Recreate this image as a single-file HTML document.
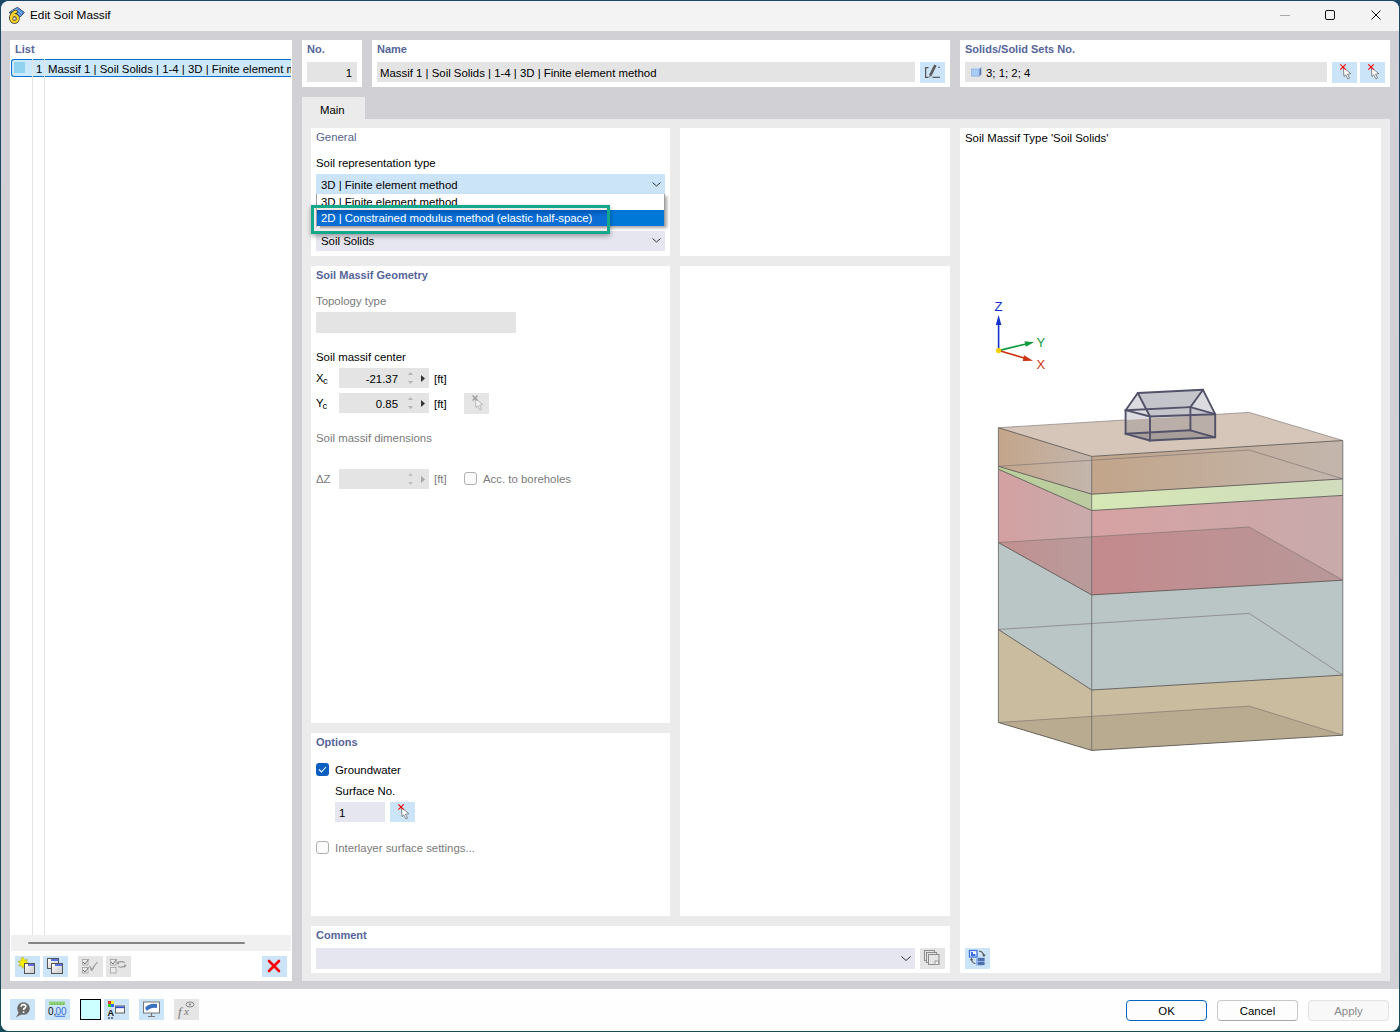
<!DOCTYPE html>
<html><head><meta charset="utf-8">
<style>
*{box-sizing:border-box;margin:0;padding:0}
html,body{width:1400px;height:1032px;overflow:hidden;background:linear-gradient(#1c4766,#164c5a);font-family:"Liberation Sans",sans-serif;font-size:11.4px;color:#000}
.a{position:absolute}
.t{position:absolute;white-space:nowrap;line-height:14px}
.h{font-weight:bold;color:#56659a;font-size:11px}
.g{color:#7a7a7a}
.w{position:absolute;background:#fff}
.inp{position:absolute;background:#e4e4e4}
.binp{position:absolute;background:#e6e6f0}
.btn{position:absolute;background:#cce4f7}
.gbtn{position:absolute;background:#e5e5e5}
svg{position:absolute;overflow:visible}
</style></head><body>
<!-- window -->
<div class="a" style="left:1px;top:1px;width:1398px;height:1030px;background:#d1d0d5;border-radius:8px;overflow:hidden">
  <div class="a" style="left:0;top:0;width:1398px;height:30px;background:#f3f3f3"></div>
  <div class="a" style="left:0;top:988px;width:1398px;height:42px;background:#fefefe"></div>
</div>

<!-- title -->
<div class="t" style="left:30px;top:8px;font-size:11.8px">Edit Soil Massif</div>


<!-- app icon -->
<svg style="left:6px;top:4px" width="22" height="22" viewBox="0 0 22 22">
  <path d="M3 8.7 L6.5 6 L11.5 3.2 L18.4 8.5 L14 13.2 L10.5 9.5 L6 9.5 Z" fill="#4a84dc" stroke="#2a3340" stroke-width="0.7" stroke-linejoin="round"/>
  <path d="M6 7.2 L11.5 4.8 M8 8.3 L12.5 6.5 L16 9.5 M11.5 9 L14.5 11.5" stroke="#9fd0fa" stroke-width="0.9" fill="none"/>
  <circle cx="8.5" cy="14.5" r="3.4" fill="none" stroke="#2a2a2a" stroke-width="3.6"/>
  <path d="M5.2 14.5 Q5 9.5 9.8 7.6" fill="none" stroke="#2a2a2a" stroke-width="3.8" stroke-linecap="round"/>
  <circle cx="8.5" cy="14.5" r="3.4" fill="none" stroke="#fcd42a" stroke-width="2.4"/>
  <path d="M5.2 14.5 Q5 9.5 9.8 7.6" fill="none" stroke="#fcd42a" stroke-width="2.5" stroke-linecap="round"/>
  <circle cx="8.5" cy="14.5" r="1.1" fill="#fff" stroke="#444" stroke-width="0.5"/>
</svg>
<!-- window buttons -->
<div class="a" style="left:1280px;top:15px;width:10px;height:1px;background:#a8a8a8"></div>
<div class="a" style="left:1325px;top:10px;width:10px;height:10px;border:1px solid #111;border-radius:2px"></div>
<svg style="left:1371px;top:10px" width="10" height="10"><path d="M0.5 0.5 L9.5 9.5 M9.5 0.5 L0.5 9.5" stroke="#111" stroke-width="1"/></svg>

<!-- List panel -->
<div class="w" style="left:10px;top:40px;width:282px;height:941px"></div>
<div class="t h" style="left:15px;top:42px">List</div>


<!-- list row -->
<div class="a" style="left:11px;top:59px;width:280px;height:18px;background:#cce8fb;border:1px solid #0a6fd0;border-right:none;border-radius:3px 0 0 3px"></div>
<div class="a" style="left:14px;top:62px;width:11px;height:11px;background:#8fd3f0"></div>
<div class="a" style="left:32px;top:59px;width:1px;height:876px;background:#e3e3e3"></div>
<div class="a" style="left:44px;top:59px;width:1px;height:876px;background:#e3e3e3"></div>
<div class="t" style="left:36px;top:62px">1</div>
<div class="a" style="left:45px;top:59px;width:246px;height:18px;overflow:hidden"><div class="t" style="left:3px;top:3px">Massif 1 | Soil Solids | 1-4 | 3D | Finite element method</div></div>
<!-- scrollbar -->
<div class="a" style="left:11px;top:935px;width:280px;height:16px;background:#f0f0f0"></div>
<div class="a" style="left:28px;top:942px;width:217px;height:2px;background:#858585;border-radius:1px"></div>
<!-- list toolbar -->
<div class="btn" style="left:15px;top:956px;width:25px;height:21px"></div><svg style="left:15px;top:956px" width="25" height="21"><defs><linearGradient id="wg" x1="0" y1="0" x2="1" y2="1"><stop offset="0" stop-color="#fff"/><stop offset="1" stop-color="#c8c8c8"/></linearGradient></defs><path d="M8.5 1.5 L9.6 4.4 L12.6 3.2 L11.2 6.1 L14 7.3 L11 8.3 L12 11.3 L9.1 9.9 L7.6 12.6 L6.8 9.5 L3.6 10 L5.4 7.4 L3 5.4 L6.2 5 L6.3 1.9 Z" fill="#f8f000" stroke="#a8a000" stroke-width="0.5"/><rect x="9.5" y="7.5" width="10" height="10" fill="url(#wg)" stroke="#555" stroke-width="1"/><rect x="13" y="8.2" width="6" height="1.6" fill="#3a55e0"/><rect x="10.3" y="8.2" width="2" height="1.6" fill="#fff"/></svg>
<div class="btn" style="left:43px;top:956px;width:25px;height:21px"></div><svg style="left:43px;top:956px" width="25" height="21"><rect x="4.5" y="2.5" width="11" height="10" fill="url(#wg)" stroke="#555" stroke-width="1"/><rect x="8" y="3.2" width="7" height="1.6" fill="#3a55e0"/><rect x="5.3" y="3.2" width="2" height="1.6" fill="#fff"/><rect x="8.5" y="7.5" width="11" height="10" fill="url(#wg)" stroke="#555" stroke-width="1"/><rect x="12" y="8.2" width="7" height="1.6" fill="#3a55e0"/><rect x="9.3" y="8.2" width="2" height="1.6" fill="#fff"/></svg>
<div class="gbtn" style="left:78px;top:956px;width:25px;height:21px"></div><svg style="left:78px;top:956px" width="25" height="21"><rect x="4.5" y="3.5" width="5.5" height="5.5" fill="#ececec" stroke="#a0a0a0" stroke-width="0.8"/><path d="M5 6 L7 8 L10.5 3.5" stroke="#666" stroke-width="0.9" fill="none"/><rect x="4.5" y="11.5" width="5.5" height="5.5" fill="#ececec" stroke="#a0a0a0" stroke-width="0.8"/><path d="M5 14 L7 16 L10.5 11.5" stroke="#666" stroke-width="0.9" fill="none"/><path d="M11.5 10 Q13 11 14 13.5 Q16 9 19.5 6 Q16 10 14.2 14.5 L13.2 14.5 Q12.5 12 11.5 10 Z" fill="#999" stroke="#999" stroke-width="0.8"/></svg>
<div class="gbtn" style="left:106px;top:956px;width:25px;height:21px"></div><svg style="left:106px;top:956px" width="25" height="21"><rect x="4.5" y="3.5" width="5.5" height="5.5" fill="#ececec" stroke="#a0a0a0" stroke-width="0.8"/><path d="M5 6 L7 8 L10.5 3.5" stroke="#666" stroke-width="0.9" fill="none"/><rect x="4.5" y="11.5" width="5.5" height="5.5" fill="#ececec" stroke="#a0a0a0" stroke-width="0.8"/><path d="M11 7 Q14 4.5 19 6.5" stroke="#999" stroke-width="1.2" fill="none"/><path d="M10.5 7.5 L13 5 L13 8.5 Z" fill="#999"/><path d="M20 9.5 Q17 12 12 10.5" stroke="#999" stroke-width="1.2" fill="none"/><path d="M20.5 9 L18 12 L18 8.5 Z" fill="#999"/></svg>
<div class="btn" style="left:262px;top:956px;width:25px;height:21px"></div>
<svg style="left:262px;top:956px" width="25" height="21"><path d="M7 5 L17 15 M17 5 L7 15" stroke="#f00" stroke-width="2.6" stroke-linecap="round"/></svg>

<!-- No. panel -->
<div class="w" style="left:302px;top:40px;width:60px;height:47px"></div>
<div class="t h" style="left:307px;top:42px">No.</div>
<div class="inp" style="left:307px;top:62px;width:50px;height:20px"></div>
<div class="t" style="left:340px;top:66px;width:12px;text-align:right">1</div>

<!-- Name panel -->
<div class="w" style="left:372px;top:40px;width:578px;height:47px"></div>
<div class="t h" style="left:377px;top:42px">Name</div>
<div class="inp" style="left:377px;top:62px;width:538px;height:20px"></div>
<div class="t" style="left:380px;top:66px">Massif 1 | Soil Solids | 1-4 | 3D | Finite element method</div>
<div class="btn" style="left:920px;top:62px;width:25px;height:21px"></div><svg style="left:920px;top:62px" width="25" height="21"><path d="M8.5 5.6 H5.6 V15.4 H8.5" stroke="#555" stroke-width="1.2" fill="none"/><path d="M12.4 15.3 H20" stroke="#555" stroke-width="1.2"/><path d="M18.2 5.3 H20" stroke="#555" stroke-width="1.1"/><path d="M15.4 3.2 L10.2 13.6" stroke="#5a5a5a" stroke-width="2.6"/><path d="M10.2 13.6 L9.4 15.2" stroke="#888" stroke-width="1.6"/></svg>

<!-- Solids panel -->
<div class="w" style="left:960px;top:40px;width:430px;height:47px"></div>
<div class="t h" style="left:965px;top:42px">Solids/Solid Sets No.</div>
<div class="inp" style="left:965px;top:62px;width:362px;height:20px"></div>
<svg style="left:971px;top:67px" width="11" height="10"><path d="M0.5 2 L2.5 0.5 L10.3 0.5 L8.3 2 Z" fill="#d6e6fa"/><path d="M0.5 2 H8.3 V9.3 H0.5 Z" fill="#a8cbf7"/><path d="M8.3 2 L10.3 0.5 V7.8 L8.3 9.3 Z" fill="#5b7db3"/><path d="M0.5 2 H8.3 V9.3 H0.5 Z M8.3 2 L10.3 0.5" fill="none" stroke="#7f9fcf" stroke-width="0.5"/></svg><div class="t" style="left:986px;top:66px">3; 1; 2; 4</div>
<div class="btn" style="left:1332px;top:62px;width:25px;height:21px"></div><svg style="left:1332px;top:62px" width="25" height="21" viewBox="0 0 25 21"><path d="M11.3 5.3 L12 14.6 L13.8 12.9 L15.9 16.9 L17.5 16.1 L15.5 12.2 L18.8 11.7 Z" fill="#fff" stroke="#6a6a6a" stroke-width="0.8" stroke-linejoin="round"/><path d="M8.3 2.3 L13.7 7.7 M13.7 2.3 L8.3 7.7" stroke="#f00" stroke-width="1.1"/></svg>
<div class="btn" style="left:1360px;top:62px;width:25px;height:21px"></div><svg style="left:1360px;top:62px" width="25" height="21" viewBox="0 0 25 21"><path d="M11.3 5.3 L12 14.6 L13.8 12.9 L15.9 16.9 L17.5 16.1 L15.5 12.2 L18.8 11.7 Z" fill="#fff" stroke="#6a6a6a" stroke-width="0.8" stroke-linejoin="round"/><path d="M8.3 2.3 L13.7 7.7 M13.7 2.3 L8.3 7.7" stroke="#f00" stroke-width="1.1"/></svg>

<!-- tab -->
<div class="a" style="left:302px;top:97px;width:63px;height:22px;background:#ebebeb"></div>
<div class="t" style="left:320px;top:103px">Main</div>
<div class="a" style="left:302px;top:119px;width:1088px;height:862px;background:#ebebeb"></div>

<!-- General -->
<div class="w" style="left:311px;top:128px;width:359px;height:128px"></div>
<div class="w" style="left:680px;top:128px;width:270px;height:128px"></div>

<!-- General content -->
<div class="t h" style="left:316px;top:130px;font-weight:normal;font-size:11.4px;color:#55638f">General</div>
<div class="t" style="left:316px;top:156px">Soil representation type</div>
<div class="a" style="left:316px;top:174px;width:349px;height:20px;background:#cce4f7"></div>
<div class="t" style="left:321px;top:178px">3D | Finite element method</div>
<svg style="left:651px;top:181px" width="10" height="6"><path d="M1.5 1.5 L5.5 5 L9.5 1.5" stroke="#333" stroke-width="1" fill="none"/></svg>
<div class="binp" style="left:316px;top:231px;width:349px;height:20px"></div>
<div class="t" style="left:321px;top:234px">Soil Solids</div>
<svg style="left:651px;top:237px" width="10" height="6"><path d="M1.5 1.5 L5.5 5 L9.5 1.5" stroke="#333" stroke-width="1" fill="none"/></svg>
<!-- dropdown list -->
<div class="a" style="left:316px;top:194px;width:349px;height:32px;background:#fff;border:1px solid #a0a0a0;border-top:none;box-shadow:2px 2px 3px rgba(0,0,0,0.35)"></div>
<div class="a" style="left:317px;top:194px;width:347px;height:16px;overflow:hidden"><div class="t" style="left:4px;top:1px">3D | Finite element method</div></div>
<div class="a" style="left:317px;top:210px;width:347px;height:16px;background:#0078d7"></div>
<div class="a" style="left:311px;top:205px;width:299px;height:29px;box-shadow:0 2px 5px rgba(0,0,0,0.35)"></div>
<div class="a" style="left:314px;top:208px;width:293px;height:23px;background:#f1eaea"></div>
<div class="a" style="left:316px;top:208px;width:1px;height:19px;background:#a8a0a0"></div>
<div class="a" style="left:320px;top:226px;width:287px;height:3px;background:linear-gradient(#9a9494,#e8e2e2)"></div>
<div class="a" style="left:317px;top:210px;width:290px;height:16px;background:linear-gradient(#0058b4,#0a6ed4 40%,#0a6ed4)"></div>
<div class="t" style="left:321px;top:211px;color:#fff">2D | Constrained modulus method (elastic half-space)</div>
<!-- highlight box -->
<div class="a" style="left:311px;top:205px;width:299px;height:29px;border:3px solid #13a88b"></div>
<!-- Geometry -->
<div class="w" style="left:311px;top:266px;width:359px;height:457px"></div>
<div class="w" style="left:680px;top:266px;width:270px;height:650px"></div>
<!-- Options -->
<div class="w" style="left:311px;top:733px;width:359px;height:183px"></div>
<!-- Comment -->
<div class="w" style="left:311px;top:926px;width:639px;height:47px"></div>
<!-- Preview -->
<div class="w" style="left:960px;top:128px;width:421px;height:845px"></div>

<!--3D--><svg style="left:960px;top:128px" width="421" height="845" viewBox="0 0 421 845"><defs>
<linearGradient id="gBrL" x1="0" x2="1" y1="0" y2="0"><stop offset="0" stop-color="#c4a58a"/><stop offset="1" stop-color="#c3b6ad"/></linearGradient>
<linearGradient id="gBrR" x1="0" x2="1" y1="0" y2="0"><stop offset="0" stop-color="#c2a58a"/><stop offset="1" stop-color="#c3b6ad"/></linearGradient>
<linearGradient id="gPkL" x1="0" x2="1" y1="0" y2="0"><stop offset="0" stop-color="#d4a0a1"/><stop offset="1" stop-color="#c9abac"/></linearGradient>
<linearGradient id="gPkR" x1="0" x2="1" y1="0" y2="0"><stop offset="0" stop-color="#d7a2a3"/><stop offset="1" stop-color="#c8aaab"/></linearGradient>
<linearGradient id="gPkDL" x1="0" x2="1" y1="0" y2="0"><stop offset="0" stop-color="#c39090"/><stop offset="1" stop-color="#b99b9c"/></linearGradient>
<linearGradient id="gPkDR" x1="0" x2="1" y1="0" y2="0"><stop offset="0" stop-color="#c48a8d"/><stop offset="1" stop-color="#b89899"/></linearGradient>
<linearGradient id="gGrL" x1="0" x2="1" y1="0" y2="0"><stop offset="0" stop-color="#bad09a"/><stop offset="1" stop-color="#bccba0"/></linearGradient>
<linearGradient id="gGrR" x1="0" x2="1" y1="0" y2="0"><stop offset="0" stop-color="#d6e8b6"/><stop offset="1" stop-color="#d0dcbd"/></linearGradient>
</defs>
<polygon points="38.4,501.5 131.7,562.0 131.7,622.4 38.4,594.5" fill="#cabd9f" gradientUnits="userSpaceOnUse"/>
<polygon points="131.7,562.0 382.8,547.1 382.8,607.2 131.7,622.4" fill="#cabd9f" />
<polygon points="38.4,594.5 131.7,588.4 131.7,622.4" fill="#b9ab8f" />
<polygon points="131.7,588.4 289.2,578.1 382.8,607.2 131.7,622.4" fill="#b9ab8f" />
<polygon points="38.4,414.6 131.7,466.9 131.7,562.0 38.4,501.5" fill="#bac5c5" gradientUnits="userSpaceOnUse"/>
<polygon points="131.7,466.9 382.8,452.2 382.8,547.1 131.7,562.0" fill="#bac5c5" />
<polygon points="38.4,501.5 131.7,495.5 131.7,562.0" fill="#bac5c5" />
<polygon points="131.7,495.5 289.2,485.4 382.8,547.1 131.7,562.0" fill="#bac5c5" />
<polygon points="38.4,341.2 131.7,382.5 131.7,466.9 38.4,414.6" fill="url(#gPkL)" gradientUnits="userSpaceOnUse"/>
<polygon points="131.7,382.5 382.8,367.4 382.8,452.2 131.7,466.9" fill="url(#gPkR)" />
<polygon points="38.4,414.6 131.7,408.8 131.7,466.9" fill="url(#gPkDL)" />
<polygon points="131.7,408.8 289.2,399.0 382.8,452.2 131.7,466.9" fill="url(#gPkDR)" />
<polygon points="38.4,338.3 131.7,366.2 131.7,382.5 38.4,341.2" fill="url(#gGrL)" gradientUnits="userSpaceOnUse"/>
<polygon points="131.7,366.2 382.8,350.9 382.8,367.4 131.7,382.5" fill="url(#gGrR)" />
<polygon points="38.4,299.7 131.7,328.4 131.7,366.2 38.4,338.3" fill="url(#gBrL)" gradientUnits="userSpaceOnUse"/>
<polygon points="131.7,328.4 382.8,312.5 382.8,350.9 131.7,366.2" fill="url(#gBrR)" />
<polygon points="38.4,338.3 131.7,332.2 131.7,366.2" fill="url(#gBrL)" />
<polygon points="131.7,332.2 289.2,322.0 382.8,350.9 131.7,366.2" fill="url(#gBrR)" />
<polygon points="38.4,299.7 289.2,284.4 382.8,312.5 131.7,328.4" fill="#d5c6b9" />
<polyline points="38.4,299.7 289.2,284.4 382.8,312.5" fill="none" stroke="#7d7272" stroke-width="0.8" opacity="0.8"/>
<polyline points="38.4,338.3 289.2,322.0 382.8,350.9" fill="none" stroke="#7d7272" stroke-width="0.8" opacity="0.8"/>
<polyline points="38.4,414.6 289.2,399.0 382.8,452.2" fill="none" stroke="#7d7272" stroke-width="0.8" opacity="0.8"/>
<polyline points="38.4,501.5 289.2,485.4 382.8,547.1" fill="none" stroke="#7d7272" stroke-width="0.8" opacity="0.8"/>
<polyline points="38.4,594.5 289.2,578.1 382.8,607.2" fill="none" stroke="#7d7272" stroke-width="0.8" opacity="0.8"/>
<polyline points="38.4,299.7 131.7,328.4 382.8,312.5" fill="none" stroke="#5f5a58" stroke-width="0.9" />
<polyline points="38.4,338.3 131.7,366.2 382.8,350.9" fill="none" stroke="#5f5a58" stroke-width="0.9" />
<polyline points="38.4,341.2 131.7,382.5 382.8,367.4" fill="none" stroke="#5f5a58" stroke-width="0.9" />
<polyline points="38.4,414.6 131.7,466.9 382.8,452.2" fill="none" stroke="#5f5a58" stroke-width="0.9" />
<polyline points="38.4,501.5 131.7,562.0 382.8,547.1" fill="none" stroke="#5f5a58" stroke-width="0.9" />
<polyline points="38.4,594.5 131.7,622.4 382.8,607.2" fill="none" stroke="#5f5a58" stroke-width="0.9" />
<line x1="38.4" y1="299.7" x2="38.4" y2="594.5" stroke="#6e6e6e" stroke-width="0.9"/>
<line x1="131.7" y1="328.4" x2="131.7" y2="622.4" stroke="#6e6e6e" stroke-width="0.9"/>
<line x1="382.8" y1="312.5" x2="382.8" y2="607.2" stroke="#6e6e6e" stroke-width="0.9"/>
<clipPath id="topc"><polygon points="38.4,299.7 289.2,284.4 382.8,312.5 131.7,328.4"/></clipPath>
<polygon points="165.6,282.2 177.8,265.0 243.0,261.8 255.2,286.2 255.2,309.3 190.0,312.5 165.6,305.8" fill="#dcdce0" />
<g clip-path="url(#topc)">
<polygon points="165.6,282.2 177.8,265.0 243.0,261.8 255.2,286.2 255.2,309.3 190.0,312.5 165.6,305.8" fill="#b9aea8" />
<polygon points="165.6,305.8 190.0,312.5 255.2,309.3 230.4,302.3" fill="#a89e99" />
</g>
<polygon points="177.8,265.0 243.0,261.8 230.4,279.1 255.2,286.2 190.0,288.5" fill="#c4c5ca" />
<line x1="165.6" y1="305.8" x2="190.0" y2="312.5" stroke="#52526a" stroke-width="1.9" stroke-linecap="round"/>
<line x1="190.0" y1="312.5" x2="255.2" y2="309.3" stroke="#52526a" stroke-width="1.9" stroke-linecap="round"/>
<line x1="255.2" y1="309.3" x2="230.4" y2="302.3" stroke="#52526a" stroke-width="1.9" stroke-linecap="round"/>
<line x1="230.4" y1="302.3" x2="165.6" y2="305.8" stroke="#52526a" stroke-width="1.9" stroke-linecap="round"/>
<line x1="165.6" y1="282.2" x2="190.0" y2="288.5" stroke="#52526a" stroke-width="1.9" stroke-linecap="round"/>
<line x1="190.0" y1="288.5" x2="255.2" y2="286.2" stroke="#52526a" stroke-width="1.9" stroke-linecap="round"/>
<line x1="255.2" y1="286.2" x2="230.4" y2="279.1" stroke="#52526a" stroke-width="1.9" stroke-linecap="round"/>
<line x1="230.4" y1="279.1" x2="165.6" y2="282.2" stroke="#52526a" stroke-width="1.9" stroke-linecap="round"/>
<line x1="165.6" y1="305.8" x2="165.6" y2="282.2" stroke="#52526a" stroke-width="1.9" stroke-linecap="round"/>
<line x1="190.0" y1="312.5" x2="190.0" y2="288.5" stroke="#52526a" stroke-width="1.9" stroke-linecap="round"/>
<line x1="255.2" y1="309.3" x2="255.2" y2="286.2" stroke="#52526a" stroke-width="1.9" stroke-linecap="round"/>
<line x1="230.4" y1="302.3" x2="230.4" y2="279.1" stroke="#52526a" stroke-width="1.9" stroke-linecap="round"/>
<line x1="177.8" y1="265.0" x2="243.0" y2="261.8" stroke="#52526a" stroke-width="1.9" stroke-linecap="round"/>
<line x1="165.6" y1="282.2" x2="177.8" y2="265.0" stroke="#52526a" stroke-width="1.9" stroke-linecap="round"/>
<line x1="190.0" y1="288.5" x2="177.8" y2="265.0" stroke="#52526a" stroke-width="1.9" stroke-linecap="round"/>
<line x1="230.4" y1="279.1" x2="243.0" y2="261.8" stroke="#52526a" stroke-width="1.9" stroke-linecap="round"/>
<line x1="255.2" y1="286.2" x2="243.0" y2="261.8" stroke="#52526a" stroke-width="1.9" stroke-linecap="round"/>

<line x1="38.60000000000002" y1="222.60000000000002" x2="38.60000000000002" y2="197" stroke="#1133cc" stroke-width="1.6"/>
<path d="M38.60000000000002,187 L41.39999999999998,197 L35.799999999999955,197 Z" fill="#1133cc"/>
<line x1="38.60000000000002" y1="222.60000000000002" x2="66" y2="216" stroke="#109a40" stroke-width="1.6"/>
<path d="M74,214.2 L64.5,213.2 L65.79999999999995,218.8 Z" fill="#109a40"/>
<line x1="38.60000000000002" y1="222.60000000000002" x2="65" y2="230.2" stroke="#cc3311" stroke-width="1.6"/>
<path d="M73,232.7 L64,227.3 L62.799999999999955,232.89999999999998 Z" fill="#cc3311"/>
<circle cx="38.60000000000002" cy="222.60000000000002" r="2.6" fill="#f5d000"/>
<text x="34.5" y="183" font-family="Liberation Sans" font-size="13" fill="#1133cc">Z</text>
<text x="76.59999999999991" y="218.8" font-family="Liberation Sans" font-size="13" fill="#109a40">Y</text>
<text x="76.59999999999991" y="241" font-family="Liberation Sans" font-size="13" fill="#cc3311">X</text>
</svg><!--/3D-->
<!-- Geometry content -->
<div class="t h" style="left:316px;top:268px">Soil Massif Geometry</div>
<div class="t g" style="left:316px;top:294px">Topology type</div>
<div class="inp" style="left:316px;top:312px;width:200px;height:21px"></div>
<div class="t" style="left:316px;top:350px">Soil massif center</div>
<div class="t" style="left:316px;top:371px">X<span style="font-size:9.5px;position:relative;top:1.5px;margin-left:-0.5px">c</span></div>
<div class="inp" style="left:339px;top:368px;width:90px;height:20px"></div>
<div class="t" style="left:339px;top:372px;width:59px;text-align:right">-21.37</div>
<svg style="left:406px;top:368px" width="20" height="20"><path d="M2 7 L4.5 4 L7 7 Z M2 13 L4.5 16 L7 13 Z" fill="#b4b4b4"/><path d="M15 7 L19 10.5 L15 14 Z" fill="#333"/></svg>
<div class="t" style="left:434px;top:372px">[ft]</div>
<div class="t" style="left:316px;top:396px">Y<span style="font-size:9.5px;position:relative;top:1.5px;margin-left:-1px">c</span></div>
<div class="inp" style="left:339px;top:393px;width:90px;height:20px"></div>
<div class="t" style="left:339px;top:397px;width:59px;text-align:right">0.85</div>
<svg style="left:406px;top:393px" width="20" height="20"><path d="M2 7 L4.5 4 L7 7 Z M2 13 L4.5 16 L7 13 Z" fill="#b4b4b4"/><path d="M15 7 L19 10.5 L15 14 Z" fill="#333"/></svg>
<div class="t" style="left:434px;top:397px">[ft]</div>
<div class="gbtn" style="left:464px;top:393px;width:25px;height:21px"></div><svg style="left:464px;top:393px" width="25" height="21" viewBox="0 0 25 21"><path d="M11.3 5.3 L12 14.6 L13.8 12.9 L15.9 16.9 L17.5 16.1 L15.5 12.2 L18.8 11.7 Z" fill="#f2f2f2" stroke="#a8a8a8" stroke-width="0.8" stroke-linejoin="round"/><path d="M8.5 2.5 L13.5 7.5 M13.5 2.5 L8.5 7.5" stroke="#9a9a9a" stroke-width="1.3"/></svg>
<div class="t g" style="left:316px;top:431px">Soil massif dimensions</div>
<div class="t g" style="left:316px;top:472px">&Delta;Z</div>
<div class="inp" style="left:339px;top:469px;width:90px;height:20px"></div>
<svg style="left:406px;top:469px" width="20" height="20"><path d="M2 7 L4.5 4 L7 7 Z M2 13 L4.5 16 L7 13 Z" fill="#c0c0c0"/><path d="M15 7 L19 10.5 L15 14 Z" fill="#a8a8a8"/></svg>
<div class="t g" style="left:434px;top:472px">[ft]</div>
<div class="a" style="left:464px;top:472px;width:13px;height:13px;border:1px solid #b0b0b0;border-radius:3px;background:#fbfbfb"></div>
<div class="t g" style="left:483px;top:472px">Acc. to boreholes</div>

<!-- Options content -->
<div class="t h" style="left:316px;top:735px">Options</div>
<div class="a" style="left:316px;top:763px;width:13px;height:13px;background:#0a5fc0;border-radius:3px"></div>
<svg style="left:316px;top:763px" width="13" height="13"><path d="M3 6.5 L5.5 9 L10 4" stroke="#fff" stroke-width="1.1" fill="none"/></svg>
<div class="t" style="left:335px;top:763px">Groundwater</div>
<div class="t" style="left:335px;top:784px">Surface No.</div>
<div class="binp" style="left:335px;top:802px;width:50px;height:20px"></div>
<div class="t" style="left:339px;top:806px">1</div>
<div class="btn" style="left:390px;top:802px;width:25px;height:20px"></div><svg style="left:390px;top:802px" width="25" height="21" viewBox="0 0 25 21"><path d="M11.3 5.3 L12 14.6 L13.8 12.9 L15.9 16.9 L17.5 16.1 L15.5 12.2 L18.8 11.7 Z" fill="#fff" stroke="#6a6a6a" stroke-width="0.8" stroke-linejoin="round"/><path d="M8.3 2.3 L13.7 7.7 M13.7 2.3 L8.3 7.7" stroke="#f00" stroke-width="1.1"/></svg>
<div class="a" style="left:316px;top:841px;width:13px;height:13px;border:1px solid #b0b0b0;border-radius:3px;background:#fbfbfb"></div>
<div class="t g" style="left:335px;top:841px">Interlayer surface settings...</div>

<!-- Comment content -->
<div class="t h" style="left:316px;top:928px">Comment</div>
<div class="binp" style="left:316px;top:948px;width:599px;height:21px"></div>
<svg style="left:900px;top:955px" width="12" height="7"><path d="M1.5 1.5 L6 5.5 L10.5 1.5" stroke="#333" stroke-width="1" fill="none"/></svg>
<div class="gbtn" style="left:920px;top:948px;width:25px;height:21px"></div><svg style="left:920px;top:948px" width="25" height="21"><rect x="4.5" y="2.5" width="10" height="10" fill="#e5e5e5" stroke="#8c8c8c" stroke-width="1"/><rect x="6.5" y="4.5" width="10" height="10" fill="#e5e5e5" stroke="#8c8c8c" stroke-width="1"/><rect x="8.5" y="6.5" width="10.5" height="10" fill="#e5e5e5" stroke="#8c8c8c" stroke-width="1"/><rect x="15" y="13" width="3.5" height="3.5" fill="#f4f4f4" stroke="#8c8c8c" stroke-width="0.8"/></svg>
<div class="btn" style="left:965px;top:948px;width:25px;height:21px"></div><svg style="left:965px;top:948px" width="25" height="21"><rect x="4.5" y="2.5" width="7.5" height="6.5" fill="#fff" stroke="#3b6ee0" stroke-width="1.3"/><path d="M6 4 H8 V6 H10.5 V8 H6 Z" fill="#3b6ee0"/><path d="M14 3 Q18 3.5 18.8 7.5" stroke="#555" stroke-width="1.1" fill="none"/><path d="M17 6.5 L19 9 L20.8 6.5 Z" fill="#555"/><path d="M10.5 15.5 Q7 15 6.5 11.5" stroke="#555" stroke-width="1.1" fill="none"/><path d="M4.8 12.2 L6.5 9.8 L8.3 12.2 Z" fill="#555"/><path d="M11 10.5 L13 9.5 H19.5 V15.5 L17.5 17.5 H11 Z" fill="#8fb3e8"/><path d="M13 10 H19.5 V13 H13 Z M13 14 H19.5 V17 H13 Z" fill="#4f6fa8"/></svg>
<div class="t" style="left:965px;top:131px">Soil Massif Type 'Soil Solids'</div>



<!-- bottom toolbar -->
<div class="btn" style="left:10px;top:999px;width:25px;height:21px"></div>
<svg style="left:10px;top:999px" width="25" height="21"><circle cx="13.5" cy="9.5" r="6.3" fill="#6a6a6a"/><path d="M9 13 L6 18.5 L12 15 Z" fill="#6a6a6a"/><path d="M11.2 7.8 Q11.2 5.6 13.5 5.6 Q15.8 5.6 15.8 7.6 Q15.8 9 13.8 9.8 L13.6 11" stroke="#fff" stroke-width="1.6" fill="none"/><circle cx="13.6" cy="13.2" r="0.9" fill="#fff"/></svg>
<div class="btn" style="left:45px;top:999px;width:25px;height:21px"></div>
<svg style="left:45px;top:999px" width="25" height="21"><rect x="4" y="2.5" width="16" height="3.5" fill="#8fd27a"/><path d="M6.5 4.5 V6 M9.5 4.5 V6 M12.5 4.5 V6 M15.5 4.5 V6 M18.5 4.5 V6" stroke="#5aa64a" stroke-width="0.7"/><text x="3" y="15.5" font-family="Liberation Sans" font-size="10" fill="#111">0,</text><text x="10.5" y="15.5" font-family="Liberation Sans" font-size="10" fill="#3a6fd8">00</text><path d="M10.5 17.3 H20" stroke="#3a6fd8" stroke-width="1"/></svg>
<div class="a" style="left:80px;top:999px;width:21px;height:21px;background:#ccffff;border:1.5px solid #000"></div>
<div class="btn" style="left:104px;top:999px;width:25px;height:21px"></div>
<svg style="left:104px;top:999px" width="25" height="21"><rect x="4" y="2" width="3" height="3" fill="#e33"/><rect x="7" y="2" width="3" height="3" fill="#ee3"/><rect x="4" y="5" width="3" height="3" fill="#3c3"/><rect x="7" y="5" width="3" height="3" fill="#36e"/><text x="3.5" y="17" font-family="Liberation Sans" font-size="9" font-weight="bold" fill="#111">A</text><path d="M4 19 h2 M7 19 h2" stroke="#111" stroke-width="1.2"/><rect x="11.5" y="7" width="9" height="7" fill="#f4f4f4" stroke="#666" stroke-width="1"/><rect x="12" y="7.5" width="8" height="1.6" fill="#2a4fd0"/></svg>
<div class="btn" style="left:139px;top:999px;width:25px;height:21px"></div>
<svg style="left:139px;top:999px" width="25" height="21"><rect x="4.5" y="3" width="16" height="11" fill="#fff" stroke="#777" stroke-width="1"/><path d="M6 9 Q10 4 18 5 L18 9 Q12 8 8 12 Z" fill="#3d6fc0"/><path d="M12.5 14 V17 M9 17.5 H16" stroke="#777" stroke-width="1.2"/></svg>
<div class="gbtn" style="left:174px;top:999px;width:25px;height:21px"></div>
<svg style="left:174px;top:999px" width="25" height="21"><text x="4" y="17" font-family="Liberation Serif" font-style="italic" font-size="13" fill="#7a7a7a">f</text><text x="10" y="16" font-family="Liberation Serif" font-style="italic" font-size="11" fill="#7a7a7a">x</text><ellipse cx="16" cy="5.5" rx="4" ry="2.5" fill="none" stroke="#7a7a7a" stroke-width="0.9"/><circle cx="16" cy="5.5" r="1" fill="#7a7a7a"/></svg>

<!-- dialog buttons -->
<div class="a" style="left:1126px;top:1000px;width:81px;height:21px;background:#fdfdfd;border:1px solid #0067c0;border-radius:4px"></div>
<div class="t" style="left:1126px;top:1004px;width:81px;text-align:center">OK</div>
<div class="a" style="left:1217px;top:1000px;width:81px;height:21px;background:#fdfdfd;border:1px solid #c8c8c8;border-bottom-color:#a8a8a8;border-radius:4px"></div>
<div class="t" style="left:1217px;top:1004px;width:81px;text-align:center">Cancel</div>
<div class="a" style="left:1308px;top:1000px;width:81px;height:21px;background:#f8f8f8;border:1px solid #e2e2e2;border-radius:4px"></div>
<div class="t" style="left:1308px;top:1004px;width:81px;text-align:center;color:#8a8a8a">Apply</div>

</body></html>
